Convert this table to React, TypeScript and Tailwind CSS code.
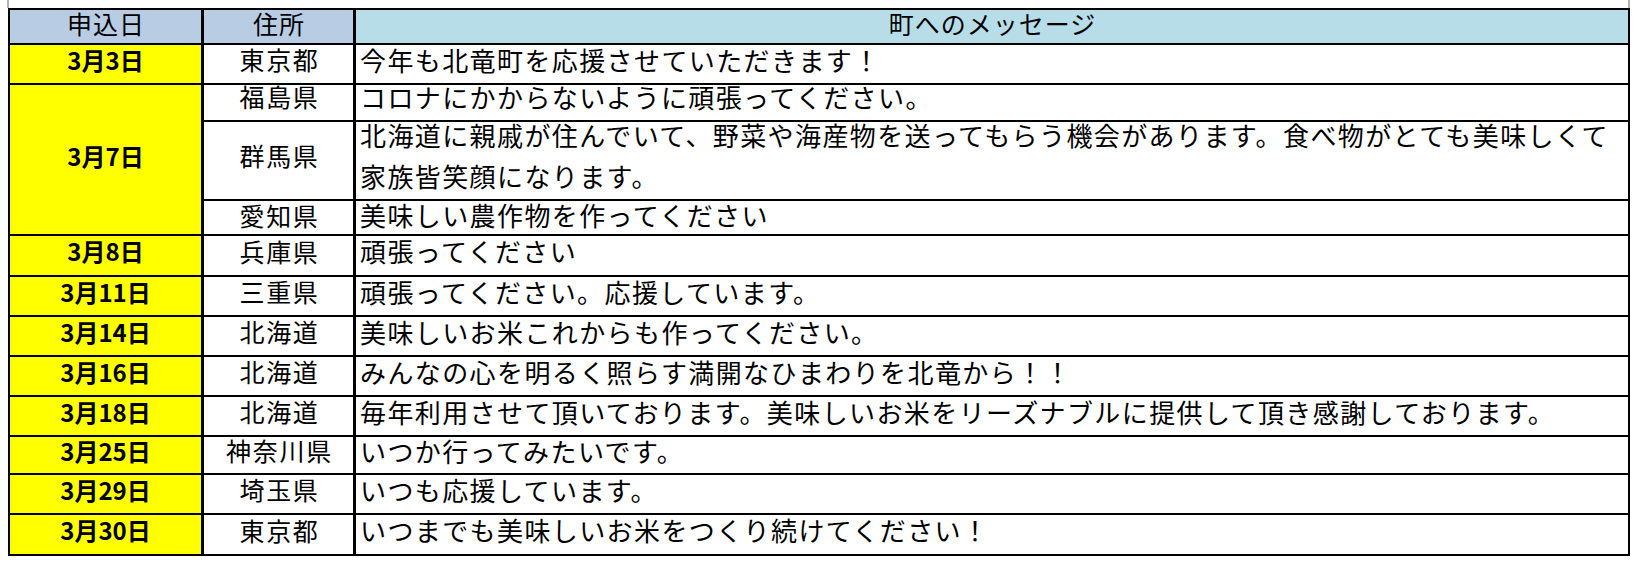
const rows = [
  { date: "3月3日", place: "東京都", msg: "今年も北竜町を応援させていただきます！", off: "mt-[1.55px]" },
  { date: "3月7日", place: "福島県", msg: "コロナにかからないように頑張ってください。", off: "mt-[-1.2px]" },
  {
    date: null,
    place: "群馬県",
    msg: "北海道に親戚が住んでいて、野菜や海産物を送ってもらう機会があります。食べ物がとても美味しくて",
    msg2: "家族皆笑顔になります。",
    off: "mt-[-0.45px]",
  },
  { date: null, place: "愛知県", msg: "美味しい農作物を作ってください", off: "mt-[1.05px]" },
  { date: "3月8日", place: "兵庫県", msg: "頑張ってください", off: "mt-[2.05px]" },
  { date: "3月11日", place: "三重県", msg: "頑張ってください。応援しています。", off: "mt-[1.55px]" },
  { date: "3月14日", place: "北海道", msg: "美味しいお米これからも作ってください。", off: "mt-[1.55px]" },
  { date: "3月16日", place: "北海道", msg: "みんなの心を明るく照らす満開なひまわりを北竜から！！", off: "mt-[1.55px]" },
  {
    date: "3月18日",
    place: "北海道",
    msg: "毎年利用させて頂いております。美味しいお米をリーズナブルに提供して頂き感謝しております。",
    off: "mt-[1.55px]",
  },
  { date: "3月25日", place: "神奈川県", msg: "いつか行ってみたいです。", off: "mt-[0.55px]" },
  { date: "3月29日", place: "埼玉県", msg: "いつも応援しています。", off: "mt-[1.55px]" },
  { date: "3月30日", place: "東京都", msg: "いつまでも美味しいお米をつくり続けてください！", off: "mt-[2.05px]" },
];

const App = () => (
  <div
    className="h-[568px] w-[1640px] bg-white text-black"
    style={{ fontFamily: '"Noto Sans CJK JP", "Noto Sans", sans-serif' }}
  >
    <div className="ml-[7px] h-[8px] w-[1623px] border-x-2 border-[#b4b4b4]" />
    <div className="ml-[8px] grid w-[1622px] grid-cols-[191px_149px_1272px] grid-rows-[33px_38px_35px_77px_33px_39px_38px_38px_38px_38px_36px_38px_39px] gap-x-[3px] gap-y-[2px] bg-black p-[2px] text-[25px] leading-none">
      <div className="bg-[#b8cce4] pl-[1px] pt-[1.1px] text-center tracking-[1px]">申込日</div>
      <div className="bg-[#b8cce4] pl-[1px] pt-[1.1px] text-center tracking-[1px]">住所</div>
      <div className="bg-[#b7dee8] pl-[1px] pt-[1.1px] text-center tracking-[1px]">町へのメッセージ</div>
      {rows.map((r, i) => (
        <div key={i} className="contents">
          {r.date === "3月7日" && (
            <div className="row-span-3 flex items-center justify-center bg-[#ffff00] pb-[8px] text-[24px] font-bold">
              {r.date}
            </div>
          )}
          {r.date && r.date !== "3月7日" && (
            <div className="bg-[#ffff00] pt-[1.1px] text-center text-[24px] font-bold">
              <div className={r.off}>{r.date}</div>
            </div>
          )}
          {r.msg2 ? (
            <div className="flex items-center justify-center bg-white pb-[11px] pl-[2px] tracking-[1.7px]">
              {r.place}
            </div>
          ) : (
            <div className="bg-white pl-[2px] pt-[0.55px] text-center tracking-[1.7px]">
              <div className={r.off}>{r.place}</div>
            </div>
          )}
          <div className="whitespace-nowrap bg-white pl-[4px] text-[26px] tracking-[1.4px]">
            <div className={r.off}>{r.msg}</div>
            {r.msg2 && <div className="mt-[15px]">{r.msg2}</div>}
          </div>
        </div>
      ))}
    </div>
  </div>
);

export default App;
